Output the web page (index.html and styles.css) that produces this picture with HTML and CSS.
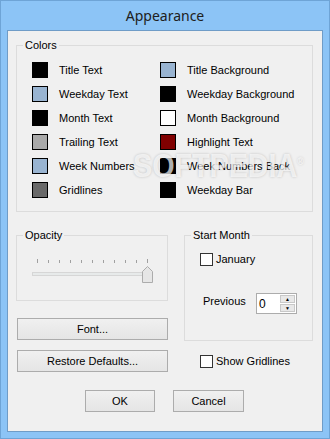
FILE: index.html
```html
<!DOCTYPE html>
<html lang="en">
<head>
    <meta charset="UTF-8">
    <title>Appearance</title>
    <link rel="stylesheet" href="styles.css">
</head>
<body>
    <div class="window">
        <div class="titlebar">Appearance</div>
        <div class="client">
            <fieldset class="group colors">
                <legend>Colors</legend>
                <div class="color-grid">
                    <div class="color-item"><span class="swatch black"></span>Title Text</div>
                    <div class="color-item"><span class="swatch blue"></span>Title Background</div>
                    <div class="color-item"><span class="swatch blue"></span>Weekday Text</div>
                    <div class="color-item"><span class="swatch black"></span>Weekday Background</div>
                    <div class="color-item"><span class="swatch black"></span>Month Text</div>
                    <div class="color-item"><span class="swatch white"></span>Month Background</div>
                    <div class="color-item"><span class="swatch gray"></span>Trailing Text</div>
                    <div class="color-item"><span class="swatch maroon"></span>Highlight Text</div>
                    <div class="color-item"><span class="swatch blue"></span>Week Numbers</div>
                    <div class="color-item"><span class="swatch black"></span>Week Numbers Back</div>
                    <div class="color-item"><span class="swatch dim"></span>Gridlines</div>
                    <div class="color-item"><span class="swatch black"></span>Weekday Bar</div>
                </div>
            </fieldset>

            <div class="lower">
                <div class="left-col">
                    <fieldset class="group opacity">
                        <legend>Opacity</legend>
                        <svg class="slider" width="130" height="28" viewBox="0 0 130 28">
                            <g stroke="#a0a0a0" stroke-width="1">
                                <line x1="5.5" y1="0" x2="5.5" y2="4"/>
                                <line x1="16.5" y1="1" x2="16.5" y2="4"/>
                                <line x1="27.5" y1="1" x2="27.5" y2="4"/>
                                <line x1="38.5" y1="1" x2="38.5" y2="4"/>
                                <line x1="49.5" y1="1" x2="49.5" y2="4"/>
                                <line x1="60.5" y1="1" x2="60.5" y2="4"/>
                                <line x1="71.5" y1="1" x2="71.5" y2="4"/>
                                <line x1="82.5" y1="1" x2="82.5" y2="4"/>
                                <line x1="93.5" y1="1" x2="93.5" y2="4"/>
                                <line x1="104.5" y1="1" x2="104.5" y2="4"/>
                                <line x1="115.5" y1="0" x2="115.5" y2="4"/>
                            </g>
                            <rect x="0.5" y="13.5" width="115" height="3" fill="#e7eaea" stroke="#d6d6d6"/>
                            <path d="M110.5 23.5 V12.5 L115.5 7.5 L120.5 12.5 V23.5 Z" fill="#e6e6e6" stroke="#acacac"/>
                        </svg>
                    </fieldset>
                    <button class="btn wide font-btn">Font...</button>
                    <button class="btn wide restore-btn">Restore Defaults...</button>
                </div>
                <div class="right-col">
                    <fieldset class="group start-month">
                        <legend>Start Month</legend>
                        <label class="check january"><span class="box"></span>January</label>
                        <div class="previous">
                            <span>Previous</span>
                            <div class="spin">
                                <span class="spin-value">0</span>
                                <div class="spin-buttons">
                                    <span class="spin-btn">&#9650;</span>
                                    <span class="spin-btn">&#9660;</span>
                                </div>
                            </div>
                        </div>
                    </fieldset>
                    <label class="check gridlines"><span class="box"></span>Show Gridlines</label>
                </div>
            </div>

            <div class="actions">
                <button class="btn ok-btn">OK</button>
                <button class="btn cancel-btn">Cancel</button>
            </div>

            <div class="watermark">SOFTPEDIA<sup>&reg;</sup></div>
        </div>
    </div>
</body>
</html>
```

FILE: styles.css
```css
body {
    margin: 0;
    background: #8cc4f6;
    font-family: 'Liberation Sans', Arial, sans-serif;
    font-size: 11px;
    color: #000;
}
.window {
    width: 330px;
    height: 439px;
    box-sizing: border-box;
    border: 1px solid #6ea4d6;
    background: #8cc4f6;
}
.titlebar {
    height: 29px;
    line-height: 29px;
    text-align: center;
    font-family: 'Noto Sans', 'Open Sans', sans-serif;
    font-size: 14px;
    color: #202020;
}
.client {
    position: relative;
    margin: 0 6px;
    height: 402px;
    box-sizing: border-box;
    border: 1px solid #6f9cc7;
    background: #f0f0f0;
    padding: 8px 9px 0 8px;
}
.group {
    margin: 0;
    padding: 0;
    border: 1px solid #dcdcdc;
    min-width: 0;
}
.group legend {
    padding: 0 2px;
    margin-left: -9px;
    line-height: 13px;
    color: #000;
}
.colors {
    padding: 10px 0 13px 15px;
}
.color-grid {
    display: grid;
    grid-template-columns: 128px 1fr;
    row-gap: 8px;
}
.color-item {
    display: flex;
    align-items: center;
    gap: 11px;
    height: 16px;
    white-space: nowrap;
}
.swatch {
    width: 14px;
    height: 14px;
    border: 1px solid #000;
    flex: none;
}
.black { background: #000; }
.blue { background: #99b4d1; }
.white { background: #fff; }
.gray { background: #a9a9a9; }
.maroon { background: #800000; }
.dim { background: #696969; }

.lower {
    display: grid;
    grid-template-columns: 152px 129px;
    column-gap: 16px;
    margin-top: 17px;
}
.left-col {
    display: flex;
    flex-direction: column;
}
.opacity {
    height: 72px;
    box-sizing: border-box;
    padding: 17px 0 0 15px;
}
.slider {
    display: block;
}
.btn {
    font-family: 'Liberation Sans', Arial, sans-serif;
    font-size: 11px;
    color: #000;
    height: 22px;
    padding: 0;
    border: 1px solid #acacac;
    background: linear-gradient(#f0f0f0, #e5e5e5);
}
.wide {
    width: 151px;
    margin-left: 1px;
}
.font-btn {
    margin-top: 17px;
}
.restore-btn {
    margin-top: 10px;
}
.right-col {
    display: flex;
    flex-direction: column;
}
.start-month {
    height: 112px;
    box-sizing: border-box;
    padding: 10px 0 0 15px;
}
.check {
    display: flex;
    align-items: center;
    gap: 3px;
    height: 14px;
}
.box {
    width: 11px;
    height: 11px;
    border: 1px solid #333;
    background: #fff;
}
.previous {
    display: flex;
    align-items: center;
    margin-top: 27px;
    margin-left: 3px;
}
.previous > span {
    width: 53px;
    margin-top: -5px;
}
.spin {
    display: flex;
    width: 41px;
    height: 21px;
    box-sizing: border-box;
    border: 1px solid #acacac;
    background: #fff;
}
.spin-value {
    flex: 1;
    padding: 3px 0 0 2px;
    font-size: 12px;
}
.spin-buttons {
    display: flex;
    flex-direction: column;
    width: 15px;
    padding: 1px 1px 1px 0;
    gap: 1px;
}
.spin-btn {
    flex: 1;
    background: #e8e8e8;
    border: 1px solid #c8c8c8;
    font-size: 5px;
    line-height: 6px;
    text-align: center;
    color: #000;
}
.gridlines {
    margin-top: 13px;
    margin-left: 16px;
}
.actions {
    display: flex;
    justify-content: center;
    gap: 18px;
    margin-top: 18px;
}
.ok-btn {
    width: 70px;
}
.cancel-btn {
    width: 71px;
}
.watermark {
    position: absolute;
    left: 125px;
    top: 116px;
    font-family: 'Liberation Sans', Arial, sans-serif;
    font-weight: bold;
    font-size: 33px;
    transform: scaleX(0.87);
    transform-origin: left top;
    color: rgba(255, 255, 255, 0.7);
    text-shadow: 0 0 3px rgba(0, 0, 0, 0.2);
    pointer-events: none;
}
.watermark sup {
    font-size: 10px;
}
```
